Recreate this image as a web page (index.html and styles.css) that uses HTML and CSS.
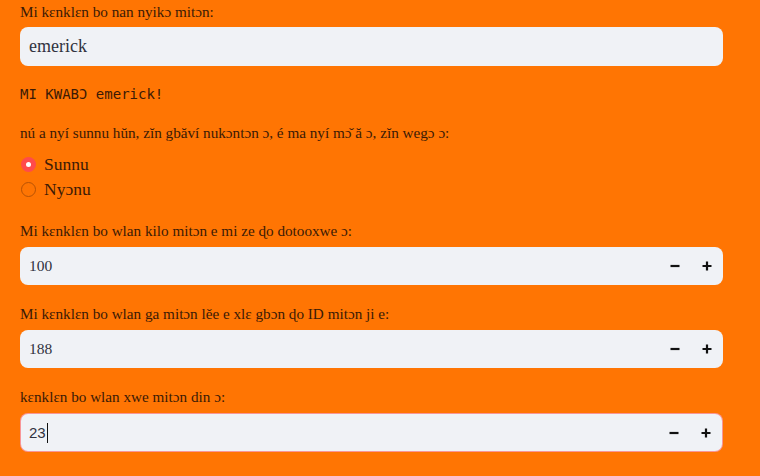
FILE: index.html
```html
<!DOCTYPE html>
<html>
<head>
<meta charset="utf-8">
<link rel="stylesheet" href="styles.css">
</head>
<body>
<main class="app">
  <label class="label first">Mi kɛnklɛn bo nan nyikɔ mitɔn:</label>
  <div class="field text-field"><span class="value big">emerick</span></div>
  <div class="mono">MI KWABƆ emerick!</div>
  <p class="para">nú a nyí sunnu hŭn, zĭn gbăví nukɔntɔn ɔ, é ma nyí mɔ̌ ă ɔ, zĭn wegɔ ɔ:</p>
  <div class="radios">
    <div class="radio"><span class="dot on"></span><span class="rtext">Sunnu</span></div>
    <div class="radio"><span class="dot"></span><span class="rtext">Nyɔnu</span></div>
  </div>
  <label class="label">Mi kɛnklɛn bo wlan kilo mitɔn e mi ze ɖo dotooxwe ɔ:</label>
  <div class="field num-field">
    <span class="value">100</span>
    <span class="step"><svg width="12" height="12" viewBox="0 0 12 12"><path d="M1.5 6h9" stroke="#111" stroke-width="2.2"/></svg></span>
    <span class="step"><svg width="12" height="12" viewBox="0 0 12 12"><path d="M1.5 6h9M6 1.5v9" stroke="#111" stroke-width="2.2"/></svg></span>
  </div>
  <label class="label">Mi kɛnklɛn bo wlan ga mitɔn lěe e xlɛ gbɔn ɖo ID mitɔn ji e:</label>
  <div class="field num-field">
    <span class="value">188</span>
    <span class="step"><svg width="12" height="12" viewBox="0 0 12 12"><path d="M1.5 6h9" stroke="#111" stroke-width="2.2"/></svg></span>
    <span class="step"><svg width="12" height="12" viewBox="0 0 12 12"><path d="M1.5 6h9M6 1.5v9" stroke="#111" stroke-width="2.2"/></svg></span>
  </div>
  <label class="label">kɛnklɛn bo wlan xwe mitɔn din ɔ:</label>
  <div class="field num-field focused">
    <span class="value sans">23<span class="caret"></span></span>
    <span class="step"><svg width="12" height="12" viewBox="0 0 12 12"><path d="M1.5 6h9" stroke="#111" stroke-width="2.2"/></svg></span>
    <span class="step"><svg width="12" height="12" viewBox="0 0 12 12"><path d="M1.5 6h9M6 1.5v9" stroke="#111" stroke-width="2.2"/></svg></span>
  </div>
  <p class="para tail">Mi kɛnklɛn bo wlan nǔ e jɛ kpo bo ɖó lɛ bǐ ɖo fí, bɔ mi na kpé azɔ̌ ɔ ɖo hwenu e jɛ é ɔ mɛ ɔ bǐ.</p>
</main>
</body>
</html>
```

FILE: styles.css
```css
html, body {
  margin: 0;
  padding: 0;
  background: #ff7503;
  height: 476px;
  overflow: hidden;
}
.app {
  display: flex;
  flex-direction: column;
  width: 703px;
  padding: 0 37px 0 20px;
  font-family: "Liberation Serif", "DejaVu Serif", serif;
  color: #3b1a06;
}
.label {
  display: block;
  font-size: 15.2px;
  line-height: 20px;
  height: 20px;
  margin-top: 19px;
  margin-bottom: 6px;
}
.label.first {
  margin-top: 2px;
  margin-bottom: 5px;
}
.field {
  display: flex;
  align-items: center;
  background: #f0f2f6;
  border-radius: 8px;
  box-sizing: border-box;
  height: 39px;
  color: #31333f;
}
.text-field {
  padding-left: 9px;
}
.num-field {
  height: 38px;
  padding-left: 9px;
}
.focused {
  height: 39px;
  border: 1px solid rgba(255, 75, 75, 0.55);
  padding-left: 8px;
}
.value {
  flex: 1;
  font-size: 15.5px;
}
.value.big {
  font-size: 18px;
}
.value.sans {
  font-family: "Liberation Sans", Arial, sans-serif;
  font-size: 15px;
  display: flex;
  align-items: center;
}
.caret {
  display: inline-block;
  width: 1px;
  height: 20px;
  background: #111;
  margin-left: 1px;
}
.step {
  width: 32px;
  height: 100%;
  display: flex;
  align-items: center;
  justify-content: center;
}
.mono {
  font-family: "DejaVu Sans Mono", "Liberation Mono", monospace;
  font-size: 14px;
  line-height: 20px;
  margin-top: 18px;
  color: #3b1a06;
}
.para {
  margin: 18px 0 0;
  font-size: 15.2px;
  line-height: 22px;
}
.radios {
  display: flex;
  flex-direction: column;
  margin-top: 8px;
}
.radio {
  display: flex;
  align-items: center;
  height: 25px;
}
.dot {
  width: 15px;
  height: 15px;
  border-radius: 50%;
  box-sizing: border-box;
  border: 1px solid #b85204;
  margin-left: 1px;
  margin-right: 8px;
  position: relative;
}
.dot.on {
  background: #ff4b4b;
  border: none;
}
.dot.on::after {
  content: "";
  position: absolute;
  left: 5px;
  top: 5px;
  width: 5px;
  height: 5px;
  border-radius: 50%;
  background: #fff;
}
.rtext {
  font-size: 17.5px;
}
.tail {
  margin-top: 20px;
  font-size: 14.5px;
}
```
